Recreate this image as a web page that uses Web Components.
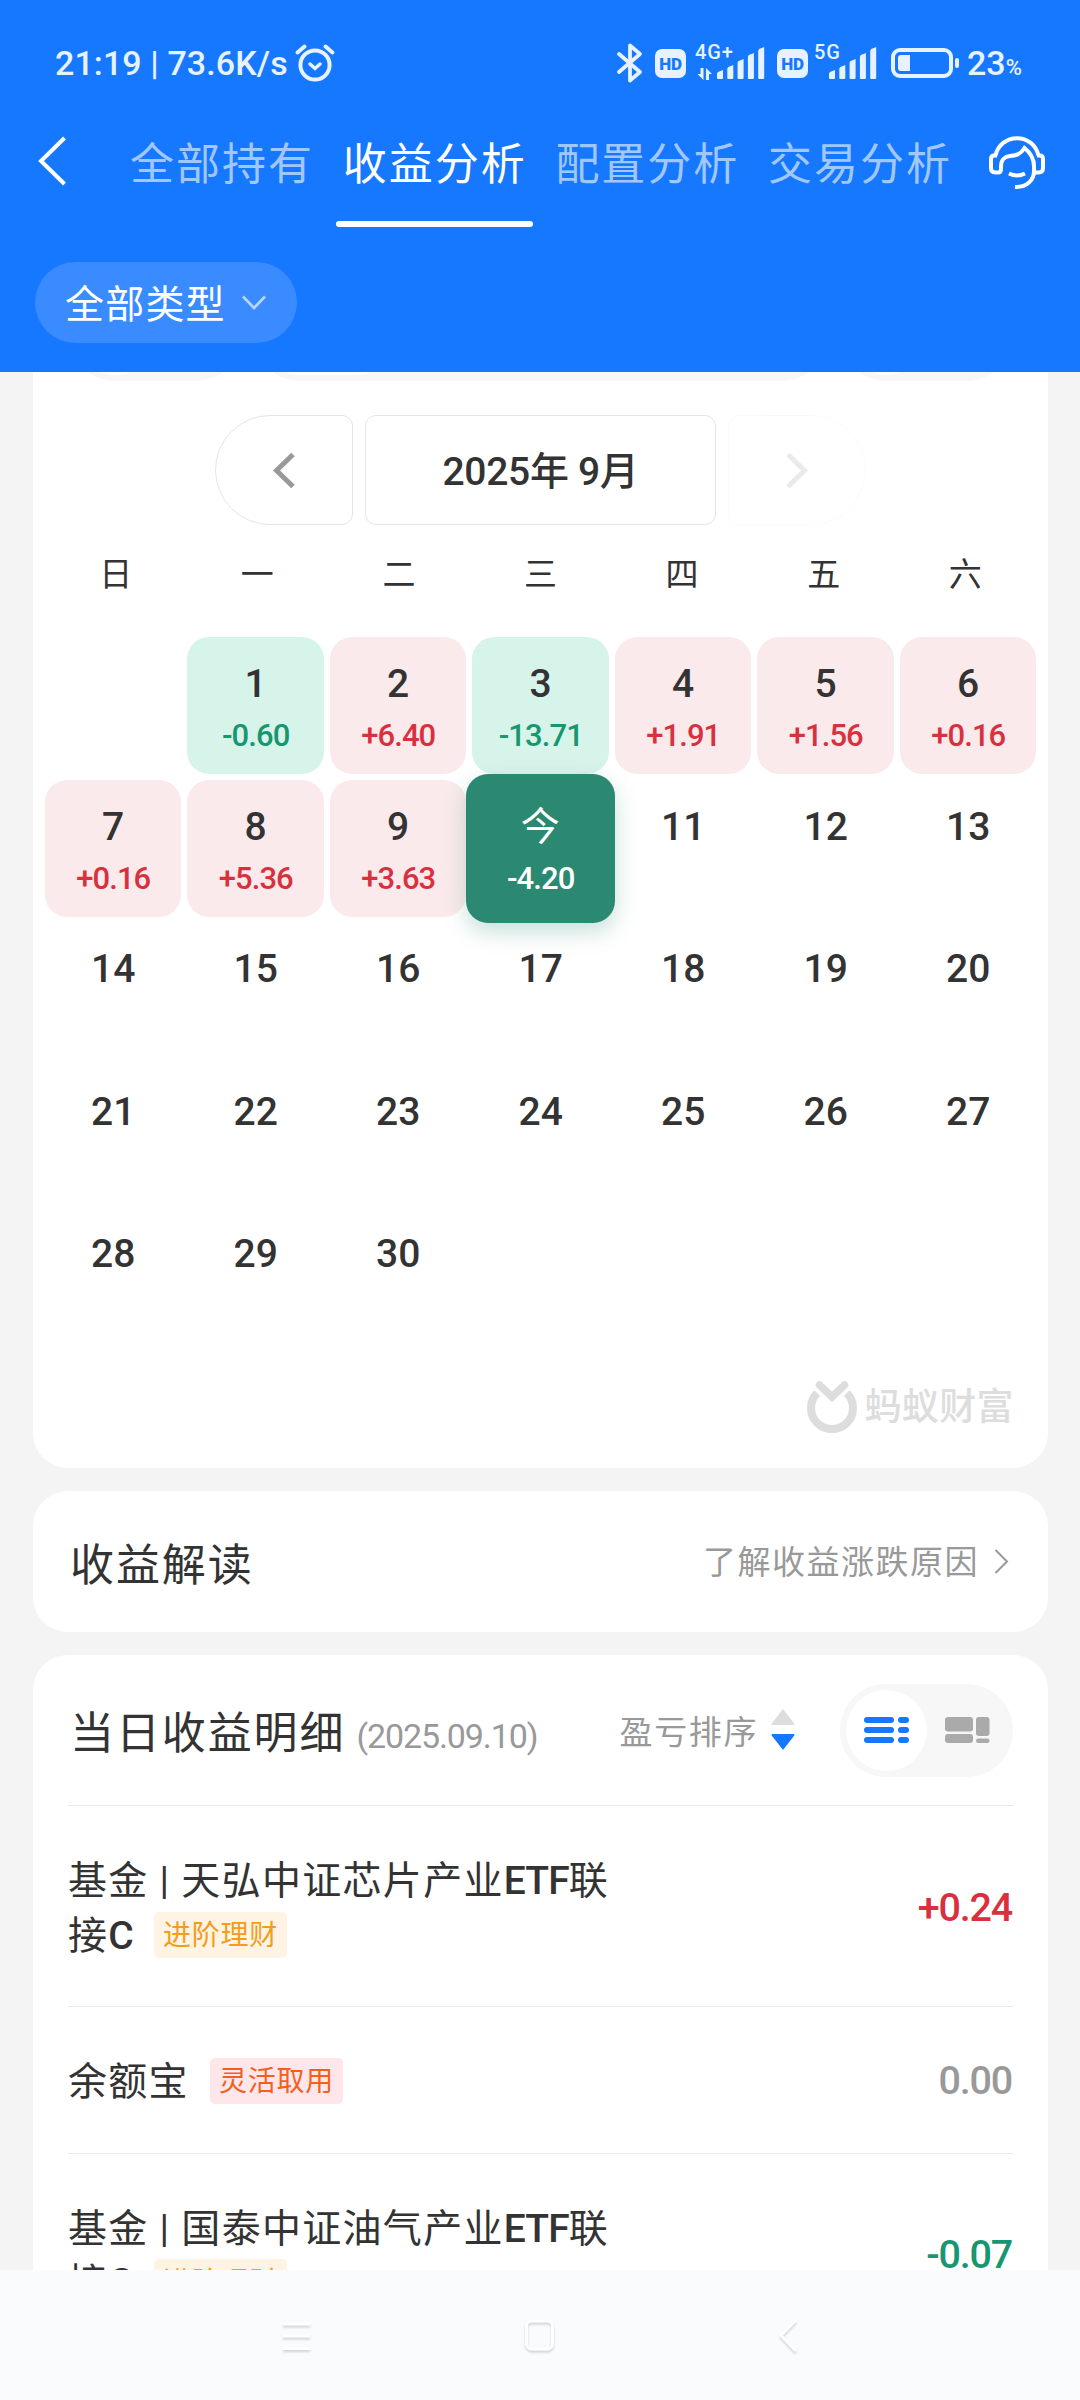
<!DOCTYPE html>
<html lang="zh-CN">
<head>
<meta charset="UTF-8">
<title>收益分析</title>
<style>
  body {
    margin: 0;
    width: 1080px;
    height: 2400px;
    overflow: hidden;
    background: #f4f4f4;
    color: #333;
    font-family: Roboto, "Noto Sans CJK SC", sans-serif;
  }
</style>
</head>
<body>
<income-page></income-page>

<script>
const ICONS = {
  alarm: [40, 38, `<g fill="none" stroke="#e6f2ff" stroke-linecap="round"><circle cx="20" cy="21" r="14.6" stroke-width="4"/><path d="M15 20l5 4.500 5-4.500" stroke-width="3.500"/><path d="M2.500 8.500l7-6M37.500 8.500l-7-6" stroke-width="4"/></g>`],
  bluetooth: [26, 40, `<path d="M2 11l21 18-10 8.500V2.500L23 11 2 29" fill="none" stroke="#e6f2ff" stroke-width="3.800" stroke-linecap="round" stroke-linejoin="round"/>`],
  battery: [69, 30, `<rect x="2" y="2" width="58" height="26" rx="7" fill="none" stroke="#e6f2ff" stroke-width="4"/><path d="M10 7h9v16h-9a3 3 0 0 1-3-3V10a3 3 0 0 1 3-3z" fill="#e6f2ff"/><rect x="64" y="10" width="4" height="10" rx="2" fill="#e6f2ff"/>`],
  back: [28, 48, `<path d="M26.500 1L3 24l23.500 23" fill="none" stroke="#fff" stroke-width="4"/>`],
  service: [56, 53, `<g fill="none" stroke="#fff" stroke-width="4"><path d="M6.500 19.500C9 9 17.500 2.200 28 2.200S47 9 49.500 19.500"/><path d="M8 19.500H5q-3 0-3 3.500v9q0 4.500 4.500 4.500H9q3 0 3-3.500v-3c0-6 4-9.500 9-10 6-.5 10-1 14.500-8 5 4 9.500 10 9.500 18v5c0 9-7 16-17.500 16H26"/><path d="M48 19.500h3q3 0 3 3.500v9q0 4.500-4.500 4.500H45"/><path d="M20 37.500q8 4 16 0"/></g>`],
  down: [24, 16, `<path d="M1 1.500l11 11.500L23 1.500" fill="none" stroke="#b7d5ff" stroke-width="2.600"/>`],
  prev: [22, 35, `<path d="M20 1.500L3.500 17.500 20 33.500" fill="none" stroke="#999" stroke-width="5"/>`],
  next: [22, 35, `<path d="M2 1.500l16.500 16L2 33.500" fill="none" stroke="#999" stroke-width="5"/>`],
  more: [15, 25, `<path d="M1.500 1l11.500 11.500L1.500 24" fill="none" stroke="#999" stroke-width="2"/>`],
  brand: [50, 52, `<path d="M12.500 4L25 16 37.500 4" fill="none" stroke="#ddd" stroke-width="7.500" stroke-linecap="round"/><path d="M10.200 12.200a21 21 0 1 0 29.600 0" fill="none" stroke="#ddd" stroke-width="8"/>`],
  sort: [24, 41, `<path d="M12 1.500L22.500 15h-21z" fill="#ddd" stroke="#ddd" stroke-width="2" stroke-linejoin="round"/><path d="M12 39.500L22.500 26h-21z" fill="#1677ff" stroke="#1677ff" stroke-width="2" stroke-linejoin="round"/>`],
  list: [45, 26, `<g fill="#1677ff"><rect width="30" height="6" rx="3"/><rect y="10" width="30" height="6" rx="3"/><rect y="20" width="30" height="6" rx="3"/><rect x="34" width="11" height="6" rx="3"/><rect x="34" y="10" width="11" height="6" rx="3"/><rect x="34" y="20" width="11" height="6" rx="3"/></g>`],
  tiles: [45, 26, `<g fill="#aaa"><rect width="28" height="14.500" rx="3"/><rect y="17" width="28" height="9" rx="3"/><rect x="31" width="13.500" height="19" rx="3"/><rect x="31" y="21.500" width="13.500" height="4.500" rx="2.200"/></g>`],
  menu: [32, 36, `<path d="M1 6h27M1 18h27M1 30.500h27" stroke="#fff" stroke-width="3"/>`],
  home: [32, 36, `<rect x="2.500" y="3" width="26" height="28" rx="5" fill="none" stroke="#fff" stroke-width="3"/>`],
  return: [22, 36, `<path d="M18 2L3 17.500 18 33" fill="none" stroke="#fff" stroke-width="3"/>`],
};

class UiIcon extends HTMLElement {
  constructor() {
    super();
    this.attachShadow({ mode: "open" });
  }
  connectedCallback() {
    const [w, h, body] = ICONS[this.getAttribute("name")];
    this.shadowRoot.innerHTML = /*html*/ `
      <style>
        :host { display: block; flex: none; }
        svg { display: block; overflow: visible; }
      </style>
      <svg width="${w}" height="${h}" viewBox="0 0 ${w} ${h}">${body}</svg>
    `;
  }
}
customElements.define("ui-icon", UiIcon);

class SignalMeter extends HTMLElement {
  constructor() {
    super();
    this.attachShadow({ mode: "open" });
  }
  connectedCallback() {
    const width = Number(this.getAttribute("width"));
    const start = width - 48;
    const bars = [8, 13, 19, 25, 31]
      .map((h, i) => {
        const x = start + i * 10.3;
        return `<path d="M${x} 34v-${h - 3}q0-1 1-2l5-2v${h}q0 1-1 1h-4q-1 0-1-1z"/>`;
      })
      .join("");
    const arrows = this.hasAttribute("data")
      ? `<path d="M8.500 23v12l-6-6h3v-6zM11 35V23l6 6h-3v6z"/>`
      : "";
    this.shadowRoot.innerHTML = /*html*/ `
      <style>
        :host { display: grid; width: ${width}px; height: 36px; }
        span, svg { grid-area: 1 / 1; }
        span { font-size: 20px; line-height: 15px; letter-spacing: .9px; font-weight: 500; }
      </style>
      <span><slot></slot></span>
      <svg width="${width}" height="36" fill="#e6f2ff">${bars}${arrows}</svg>
    `;
  }
}
customElements.define("signal-meter", SignalMeter);

class StatusBar extends HTMLElement {
  constructor() {
    super();
    this.attachShadow({ mode: "open" });
    this.shadowRoot.innerHTML = /*html*/ `
      <style>
        :host {
          display: flex;
          align-items: center;
          height: 126px;
          padding: 0 55px;
          color: #e6f2ff;
          font-size: 34px;
          font-weight: 500;
        }
        .left, .right { display: flex; align-items: center; }
        .right { margin-left: auto; }
        .time { width: 240px; white-space: pre; letter-spacing: .1px; }
        .hd {
          width: 31px; height: 29px;
          border-radius: 7px;
          background: #e6f2ff;
          color: #1677ff;
          font-size: 17px;
          line-height: 30px;
          font-weight: 900;
          text-align: center;
          letter-spacing: -.2px;
        }
        .pct { display: flex; align-items: baseline; width: 58px; letter-spacing: 0; }
        small { font-size: 22px; letter-spacing: 0; }
      </style>
      <div class="left"><span class="time">21:19 | 73.6K/s</span><ui-icon name="alarm"></ui-icon></div>
      <div class="right">
        <ui-icon name="bluetooth"></ui-icon>
        <span class="hd" style="margin-left:12px">HD</span>
        <signal-meter width="70" data style="margin-left:9px">4G+</signal-meter>
        <span class="hd" style="margin-left:12px">HD</span>
        <signal-meter width="63" style="margin-left:6px">5G</signal-meter>
        <ui-icon name="battery" style="margin-left:14px"></ui-icon>
        <span class="pct" style="margin-left:7px">23<small>%</small></span>
      </div>
    `;
  }
}
customElements.define("status-bar", StatusBar);

class TabItem extends HTMLElement {
  constructor() {
    super();
    this.attachShadow({ mode: "open" });
    this.shadowRoot.innerHTML = /*html*/ `
      <style>
        :host {
          display: flex;
          flex-direction: column;
          width: 197px;
          height: 101px;
          justify-content: space-between;
          text-align: center;
          font-size: 44px;
          line-height: 79px;
          letter-spacing: 2px;
          white-space: nowrap;
          color: #a0c8ff;
        }
        :host([active]) { color: #fff; }
        i { height: 6px; border-radius: 3px; }
        :host([active]) i { background: #fff; }
      </style>
      <span><slot></slot></span><i></i>
    `;
  }
}
customElements.define("tab-item", TabItem);

class PageHeader extends HTMLElement {
  constructor() {
    super();
    this.attachShadow({ mode: "open" });
    this.shadowRoot.innerHTML = /*html*/ `
      <style>
        :host { display: block; height: 372px; background: #1677ff; color: #fff; flex: none; }
        nav { display: flex; height: 101px; padding: 0 35px 0 38px; }
        nav > ui-icon { margin-top: 11px; }
        .tabs { display: flex; gap: 15.7px; margin-left: 57.5px; }
        nav > .service { margin: 10px 0 0 auto; }
        .filter {
          display: flex;
          align-items: center;
          gap: 16px;
          box-sizing: border-box;
          width: 262px;
          height: 81px;
          margin: 35px 0 0 35px;
          padding-left: 30px;
          border-radius: 41px;
          background: #3a8bff;
          font-size: 39px;
          letter-spacing: 1.2px;
        }
        .filter span { margin-top: -4px; }
      </style>
      <status-bar></status-bar>
      <nav>
        <ui-icon name="back"></ui-icon>
        <div class="tabs">
          <tab-item>全部持有</tab-item>
          <tab-item active>收益分析</tab-item>
          <tab-item>配置分析</tab-item>
          <tab-item>交易分析</tab-item>
        </div>
        <ui-icon class="service" name="service"></ui-icon>
      </nav>
      <div class="filter"><span>全部类型</span><ui-icon name="down"></ui-icon></div>
    `;
  }
}
customElements.define("page-header", PageHeader);

class DayCell extends HTMLElement {
  constructor() {
    super();
    this.attachShadow({ mode: "open" });
  }
  connectedCallback() {
    const amount = this.getAttribute("amount") || "";
    this.shadowRoot.innerHTML = /*html*/ `
      <style>
        :host {
          display: flex;
          flex-direction: column;
          align-items: center;
          height: 137px;
          border-radius: 22px;
        }
        b { margin-top: 22px; padding-left: 1px; font-size: 39px; line-height: 50px; font-weight: 500; letter-spacing: .2px; }
        span { margin-top: 8px; padding-left: 1px; font-size: 31px; line-height: 38px; font-weight: 500; letter-spacing: -.9px; }
        :host([kind="up"]) { background: #fbeaeb; }
        :host([kind="up"]) span { color: #d9303e; }
        :host([kind="down"]) { background: #d7f4eb; }
        :host([kind="down"]) span { color: #17966f; }
        :host([kind="today"]) {
          margin: -6px;
          height: 149px;
          background: #2b8971;
          color: #fff;
          box-shadow: 0 9px 22px rgba(43, 137, 113, .26);
          z-index: 1;
        }
        :host([kind="today"]) b { margin-top: 28px; padding: 0; font-weight: 400; letter-spacing: 0; }
      </style>
      <b><slot></slot></b>
      ${amount ? `<span>${amount}</span>` : ""}
    `;
  }
}
customElements.define("day-cell", DayCell);

class IncomeCalendar extends HTMLElement {
  amounts = ["-0.60", "+6.40", "-13.71", "+1.91", "+1.56", "+0.16", "+0.16", "+5.36", "+3.63", "-4.20"];
  constructor() {
    super();
    this.attachShadow({ mode: "open" });
  }
  connectedCallback() {
    this.shadowRoot.innerHTML = /*html*/ `
      <style>${IncomeCalendar.styles}</style>
      <div class="switch">
        <div class="pill" style="width:171px"><i style="width:79px"></i></div>
        <div class="pill" style="width:572px"><i style="width:133px"></i></div>
        <div class="pill" style="width:171px"><i style="width:79px"></i></div>
      </div>
      <div class="month">
        <div class="box prev"><ui-icon name="prev"></ui-icon></div>
        <div class="box title">2025年 9月</div>
        <div class="box next"><ui-icon name="next"></ui-icon></div>
      </div>
      <div class="week">${[..."日一二三四五六"].map((d) => `<span>${d}</span>`).join("")}</div>
      <div class="days">${this.days()}</div>
      <div class="brand"><ui-icon name="brand"></ui-icon><span>蚂蚁财富</span></div>
    `;
  }
  days() {
    let html = "";
    for (let day = 1; day <= 30; day++) {
      const amount = this.amounts[day - 1] || "";
      let kind = "";
      if (amount) kind = amount[0] === "+" ? "up" : "down";
      if (day === 10) kind = "today";
      html += `<day-cell kind="${kind}" amount="${amount}">${day === 10 ? "今" : day}</day-cell>`;
    }
    return html;
  }
  static get styles() {
    return /*css*/ `
      :host {
        display: flex;
        flex-direction: column;
        box-sizing: border-box;
        height: 1096px;
        background: #fff;
        border-radius: 0 0 35px 35px;
      }
      .switch { display: flex; justify-content: center; gap: 14px; height: 9px; overflow: hidden; align-items: flex-end; }
      .pill { display: flex; box-sizing: border-box; height: 90px; padding: 6px; border-radius: 45px; background: #f7f7f7; flex: none; }
      .pill i { background: #fff; border-radius: 39px; }
      .month { display: flex; justify-content: center; gap: 12px; margin-top: 34px; }
      .box {
        display: flex;
        align-items: center;
        justify-content: center;
        box-sizing: border-box;
        width: 138px;
        height: 110px;
        border: 1px solid #e5e5e5;
        border-radius: 11px;
      }
      .prev { border-radius: 55px 11px 11px 55px; }
      .title { width: 351px; padding-bottom: 4px; font-size: 39px; font-weight: 500; letter-spacing: -.3px; }
      .next { border-radius: 11px 55px 55px 11px; opacity: .2; }
      .week {
        display: grid;
        grid-template-columns: repeat(7, 1fr);
        margin: 27px 12px 0;
        height: 46px;
        line-height: 46px;
        font-size: 33px;
        text-align: center;
      }
      .days {
        display: grid;
        grid-template-columns: repeat(7, 136.5px);
        grid-auto-rows: 137px;
        gap: 5.6px 6px;
        margin: 39px 0 0 11.500px;
      }
      .days day-cell:first-child { grid-column: 2; }
      .brand {
        display: flex;
        align-items: center;
        justify-content: flex-end;
        gap: 7px;
        margin: auto 34px 33px 0;
        color: #ddd;
        font-size: 37px;
        line-height: 54px;
        font-weight: 500;
        letter-spacing: .4px;
      }
      .brand span { padding-top: 3px; }
    `;
  }
}
customElements.define("income-calendar", IncomeCalendar);

class FundRow extends HTMLElement {
  constructor() {
    super();
    this.attachShadow({ mode: "open" });
  }
  connectedCallback() {
    this.shadowRoot.innerHTML = /*html*/ `
      <style>
        :host {
          display: flex;
          align-items: center;
          justify-content: space-between;
          box-sizing: border-box;
          padding: 47px 1px 44px 0;
          border-top: 1px solid #e9e9e9;
        }
        .name { width: 550px; padding-top: 1px; margin-bottom: -1px; font-size: 39px; line-height: 54.5px; font-weight: 400; letter-spacing: 1.3px; }
        .name ::slotted(b) { font-weight: 500; letter-spacing: -.9px; }
        .tag {
          display: inline-block;
          height: 46px;
          margin: -10px 0 -10px 21px;
          padding: 0 9px;
          border-radius: 5px;
          font-size: 28px;
          line-height: 47px;
          letter-spacing: .8px;
          vertical-align: 4px;
          color: #f49c1e;
          background: #fff4e4;
        }
        :host([tone="hot"]) .tag { color: #f1611c; background: #ffe6ea; }
        .amount { font-size: 39.5px; line-height: 54px; font-weight: 500; color: #999; letter-spacing: -1.2px; }
        :host([trend="up"]) .amount { color: #d9303e; }
        :host([trend="down"]) .amount { color: #17966f; }
      </style>
      <div class="name"><slot></slot><span class="tag">${this.getAttribute("tag")}</span></div>
      <div class="amount">${this.getAttribute("amount")}</div>
    `;
  }
}
customElements.define("fund-row", FundRow);

class IncomePage extends HTMLElement {
  constructor() {
    super();
    this.attachShadow({ mode: "open" });
    this.shadowRoot.innerHTML = /*html*/ `
      <style>${IncomePage.styles}</style>
      <page-header></page-header>
      <main>
        <income-calendar></income-calendar>
        <section class="card insight">
          <h2>收益解读</h2>
          <div class="link"><span>了解收益涨跌原因</span><ui-icon name="more"></ui-icon></div>
        </section>
        <section class="card detail">
          <header>
            <h2>当日收益明细</h2>
            <span class="date">(2025.09.10)</span>
            <span class="sort">盈亏排序<ui-icon name="sort"></ui-icon></span>
            <div class="toggle">
              <div class="on"><ui-icon name="list"></ui-icon></div>
              <ui-icon name="tiles"></ui-icon>
            </div>
          </header>
          <fund-row trend="up" amount="+0.24" tag="进阶理财">基金 | 天弘中证芯片产业<b>ETF</b>联<br>接<b>C</b></fund-row>
          <fund-row tone="hot" amount="0.00" tag="灵活取用">余额宝</fund-row>
          <fund-row trend="down" amount="-0.07" tag="进阶理财">基金 | 国泰中证油气产业<b>ETF</b>联<br>接<b>C</b></fund-row>
        </section>
      </main>
      <footer>
        <ui-icon name="menu"></ui-icon>
        <ui-icon name="home"></ui-icon>
        <ui-icon name="return"></ui-icon>
      </footer>
    `;
  }
  static get styles() {
    return /*css*/ `
      :host { display: flex; flex-direction: column; height: 2400px; }
      main {
        display: flex;
        flex-direction: column;
        gap: 23px;
        height: 1898px;
        padding: 0 32px 0 33px;
        overflow: hidden;
      }
      main > * { flex: none; }
      .card { background: #fff; border-radius: 35px; }
      h2 { margin: 0; padding-top: 8px; font-size: 44px; line-height: 60px; font-weight: 400; letter-spacing: 1.9px; }
      .insight { display: flex; align-items: center; height: 141px; padding: 0 39px 0 37px; }
      .link {
        display: flex;
        align-items: center;
        gap: 15px;
        margin-left: auto;
        font-size: 33px;
        letter-spacing: 1.5px;
        color: #999;
      }
      .link span { margin-top: -3px; }
      .detail { padding: 0 35px; }
      .detail header { display: flex; align-items: center; height: 150px; }
      .detail h2 { margin-left: 2px; }
      .date { margin: 11px 0 0 11px; font-size: 34px; letter-spacing: -1.1px; color: #999; }
      .sort {
        display: flex;
        align-items: center;
        gap: 13px;
        margin-left: auto;
        font-size: 33px;
        letter-spacing: 1.6px;
        color: #999;
      }
      .sort ui-icon { margin-top: -2px; }
      .toggle {
        display: flex;
        align-items: center;
        gap: 18px;
        box-sizing: border-box;
        width: 173px;
        height: 93px;
        margin-left: 45px;
        padding: 6px;
        border-radius: 47px;
        background: #f7f7f7;
      }
      .on { display: flex; align-items: center; justify-content: center; width: 81px; height: 81px; border-radius: 50%; background: #fff; }
      footer {
        display: grid;
        grid-template-columns: 242px 254px 22px;
        align-items: center;
        height: 130px;
        padding: 2px 0 0 282px;
        box-sizing: border-box;
        background: #fafbfd;
      }
      footer ui-icon { filter: drop-shadow(0 2px 1px rgba(0, 0, 0, .16)); }
    `;
  }
}
customElements.define("income-page", IncomePage);
</script>
</body>
</html>
